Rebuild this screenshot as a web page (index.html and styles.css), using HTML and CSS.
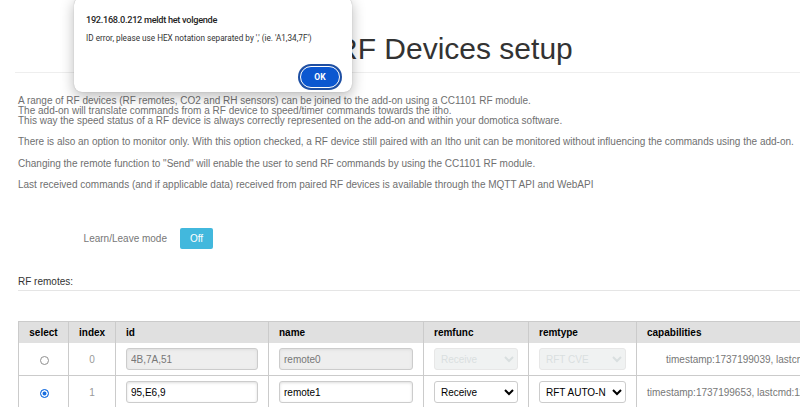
FILE: index.html
```html
<!DOCTYPE html>
<html>
<head>
<meta charset="utf-8">
<title>RF Devices setup</title>
<link rel="stylesheet" href="styles.css">
</head>
<body>
<div class="page">
  <div class="header"><h1>RF Devices setup</h1></div>
  <div class="content">
    <p>A range of RF devices (RF remotes, CO2 and RH sensors) can be joined to the add-on using a CC1101 RF module.<br>The add-on will translate commands from a RF device to speed/timer commands towards the itho.<br>This way the speed status of a RF device is always correctly represented on the add-on and within your domotica software.</p>
    <p>There is also an option to monitor only. With this option checked, a RF device still paired with an Itho unit can be monitored without influencing the commands using the add-on.</p>
    <p>Changing the remote function to "Send" will enable the user to send RF commands by using the CC1101 RF module.</p>
    <p>Last received commands (and if applicable data) received from paired RF devices is available through the MQTT API and WebAPI</p>
    <div class="control"><label>Learn/Leave mode</label><button class="btn-off">Off</button></div>
    <div class="legend">RF remotes:</div>
    <div class="table-wrap">
      <table class="rf-table">
        <colgroup><col class="c-select"><col class="c-index"><col class="c-id"><col class="c-name"><col class="c-func"><col class="c-type"><col class="c-cap"></colgroup>
        <thead>
          <tr><th class="center">select</th><th class="center">index</th><th>id</th><th>name</th><th>remfunc</th><th>remtype</th><th>capabilities</th></tr>
        </thead>
        <tbody>
          <tr>
            <td class="center"><input type="radio" name="sel" class="radio"></td>
            <td class="center idx">0</td>
            <td><input class="field" readonly value="4B,7A,51"></td>
            <td><input class="field" readonly value="remote0"></td>
            <td><select class="sel" disabled><option>Receive</option></select></td>
            <td><select class="sel" disabled><option>RFT CVE</option></select></td>
            <td class="cap cap-short">timestamp:1737199039, lastcm</td>
          </tr>
          <tr>
            <td class="center"><input type="radio" name="sel" class="radio" checked></td>
            <td class="center idx">1</td>
            <td><input class="field" value="95,E6,9"></td>
            <td><input class="field" value="remote1"></td>
            <td><select class="sel"><option>Receive</option></select></td>
            <td><select class="sel"><option>RFT AUTO-N</option></select></td>
            <td class="cap">timestamp:1737199653, lastcmd:11</td>
          </tr>
        </tbody>
      </table>
    </div>
  </div>
</div>
<div class="dialog" role="alertdialog">
  <div class="dlg-title">192.168.0.212 meldt het volgende</div>
  <div class="dlg-msg">ID error, please use HEX notation separated by ',' (ie. 'A1,34,7F')</div>
  <div class="dlg-actions"><button class="dlg-ok">OK</button></div>
</div>
</body>
</html>
```
FILE: styles.css
```css
* { box-sizing: border-box; }
html, body { margin: 0; padding: 0; background: #fff; overflow: hidden; }
body {
  font-family: "Liberation Sans", Arial, sans-serif;
  color: #777;
  width: 800px;
  height: 407px;
  position: relative;
}
.header {
  margin-left: 15px;
  border-bottom: 1px solid #eee;
  padding: 31px 0 0 321px;
}
.header h1 {
  margin: 0 0 5px;
  font-size: 30px;
  line-height: 36px;
  font-weight: 300;
  color: #333;
  white-space: nowrap;
}
.content { padding: 22.5px 0 0 18px; }
.content p {
  margin: 0 0 11px;
  font-size: 10px;
  line-height: 10.3px;
  white-space: nowrap;
  color: #6f6f6f;
}
.control { display: flex; align-items: center; gap: 13px; margin-top: 38px; }
.control label { width: 149px; text-align: right; font-size: 10px; color: #777; }
.btn-off {
  width: 33px; height: 21px; padding: 0; border: 0; border-radius: 2px;
  background: #42b8dd; color: #fff;
  font: 10px "Liberation Sans", Arial, sans-serif;
}
.legend {
  margin-top: 27px;
  font-size: 10px;
  line-height: 12px;
  padding-bottom: 2px;
  border-bottom: 1px solid #e5e5e5;
  color: #333;
}
.table-wrap { margin-top: 30px; overflow: hidden; }
.rf-table {
  border-collapse: collapse;
  table-layout: fixed;
  width: 918px;
  border: 1px solid #cbcbcb;
  font-size: 10px;
}
.c-select { width: 50px; }
.c-index { width: 47px; }
.c-id { width: 153px; }
.c-name { width: 155px; }
.c-func { width: 105px; }
.c-type { width: 108px; }
.c-cap { width: 300px; }
.rf-table th {
  background: #e0e0e0; color: #000; font-weight: bold; text-align: left;
  padding: 5px 10px; line-height: 11px; border-left: 1px solid #cbcbcb;
}
.rf-table td {
  padding: 5px 10px; line-height: 11px; color: #777;
  border-left: 1px solid #cbcbcb; border-bottom: 1px solid #cbcbcb;
  vertical-align: middle; white-space: nowrap; overflow: hidden;
}
.rf-table .center { text-align: center; }
.rf-table .idx { color: #999; }
.rf-table .cap-short { padding-left: 29px; }
.field {
  display: block; width: 100%; height: 22px; padding: 0 4px;
  border: 1px solid #ccc; border-radius: 3px; box-shadow: inset 0 1px 3px #ddd;
  font: 10px "Liberation Sans", Arial, sans-serif; color: #000; background: #fff;
}
.field[readonly] { background: #eee; color: #777; }
.sel {
  display: block; width: 100%; height: 22px; padding: 0 2px;
  border: 1px solid #ccc; border-radius: 3px; background: #fff;
  font: 10px "Liberation Sans", Arial, sans-serif; color: #000;
}
.sel:disabled { background: #eaeded; color: #cad2d3; border-color: #ddd; }
.radio {
  appearance: none; -webkit-appearance: none;
  width: 9px; height: 9px; margin: 0 0 0 2px; vertical-align: middle;
  border: 1px solid #8f8f8f; border-radius: 50%; background: #fff;
}
.radio:checked { border-color: #1a6fe0; background: #1a6fe0; box-shadow: inset 0 0 0 1.5px #fff; }
.dialog {
  position: absolute; left: 74px; top: -3px; width: 278px; height: 95px;
  background: #fff; border-radius: 8px;
  box-shadow: 0 4px 14px rgba(0,0,0,.28), 0 0 1px rgba(0,0,0,.3);
  padding: 15px 12px 4px 12px;
  display: flex; flex-direction: column;
  font-family: Roboto, "Noto Sans", sans-serif; color: #1f1f1f;
}
.dlg-title { font-size: 9.2px; font-weight: 500; line-height: 15px; letter-spacing: -0.3px; white-space: nowrap; }
.dlg-msg { margin-top: 5px; font-size: 8.2px; line-height: 12px; white-space: nowrap; color: #333; }
.dlg-actions { margin-top: auto; display: flex; justify-content: flex-end; }
.dlg-ok {
  width: 40px; height: 22px; padding: 0; border-radius: 11px;
  background: #0b57d0; border: 1.5px solid #fff; box-shadow: 0 0 0 2px #1e4fa3;
  color: #fff; font: 700 8.5px Roboto, sans-serif;
}
```
